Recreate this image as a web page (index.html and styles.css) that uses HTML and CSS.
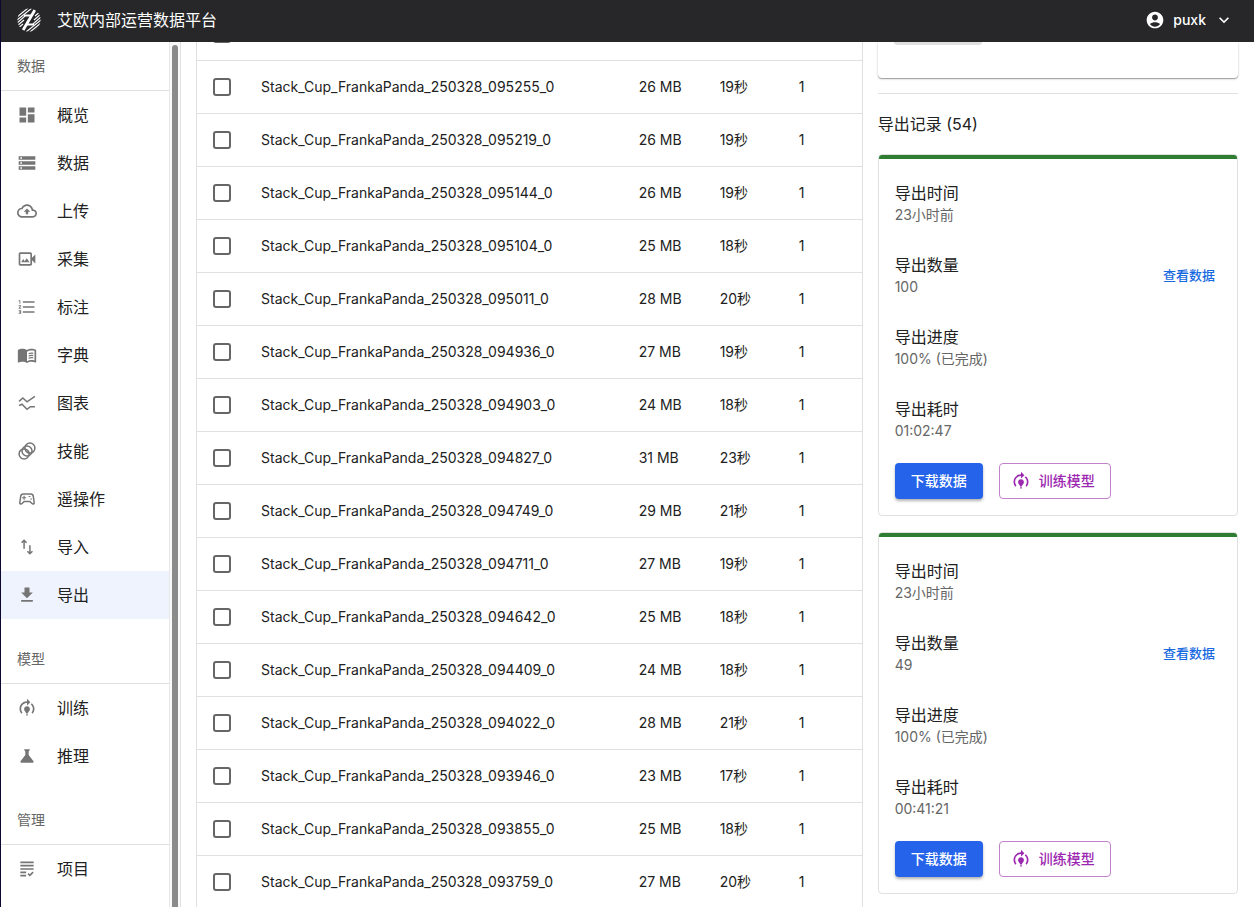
FILE: index.html
```html
<!DOCTYPE html>
<html lang="zh-CN">
<head>
<meta charset="UTF-8">
<meta name="viewport" content="width=device-width, initial-scale=1.0">
<title>艾欧内部运营数据平台</title>
<link rel="stylesheet" href="styles.css">
</head>
<body>
  <!-- Shared icons -->
  <svg class="sprite" aria-hidden="true">
    <symbol id="icon-training" viewBox="0 0 24 24">
      <path d="M15.5 13.5c0 2-2.5 3.5-2.5 5h-2c0-1.5-2.5-3-2.5-5 0-1.93 1.57-3.5 3.5-3.5s3.5 1.57 3.5 3.5zm-2.5 6h-2V21h2v-1.5zm6-6.5c0 1.68-.59 3.21-1.58 4.42l1.42 1.42C20.18 17.27 21 15.23 21 13c0-2.74-1.23-5.19-3.16-6.84l-1.42 1.42C17.99 8.86 19 10.82 19 13zm-3-8-4-4v3c-4.97 0-9 4.03-9 9 0 2.23.82 4.27 2.16 5.84l1.42-1.42C5.59 16.21 5 14.68 5 13c0-3.86 3.14-7 7-7v3l4-4z"/>
    </symbol>
  </svg>

  <header class="topbar">
    <svg class="logo" viewBox="0 0 24 24" aria-hidden="true">
      <clipPath id="logo-clip"><circle cx="12" cy="12" r="11.6"/></clipPath>
      <g clip-path="url(#logo-clip)" fill="none" stroke="#fff">
        <path stroke-width="1.1" d="M0 6 7 0M0 9 11 0M0 12 15 0M0 15 8 8M0 18 7 12M0 21 6 16M24 18 17 24M24 15 13 24M24 12 9 24M24 9 16 16M24 6 17 12M24 3 18 8"/>
        <path stroke-width="2.8" d="M5 24 19 0"/>
        <path stroke-width="1.8" d="M7 7.5h7M10 16.5h7"/>
      </g>
    </svg>
    <h1 class="brand">艾欧内部运营数据平台</h1>
    <button class="user" type="button">
      <svg class="icon" viewBox="0 0 24 24" aria-hidden="true"><path d="M12 2C6.48 2 2 6.48 2 12s4.48 10 10 10 10-4.48 10-10S17.52 2 12 2zm0 3.5c1.93 0 3.5 1.57 3.5 3.5S13.93 12.5 12 12.5 8.5 10.93 8.5 9s1.57-3.5 3.5-3.5zM12 20c-2.3 0-4.45-1-6.1-3.1C7.55 15.4 9.7 14.6 12 14.6s4.45.8 6.1 2.3C16.45 19 14.3 20 12 20z"/></svg>
      <span>puxk</span>
      <svg class="icon" viewBox="0 0 24 24" aria-hidden="true"><path d="M16.59 8.59 12 13.17 7.41 8.59 6 10l6 6 6-6z"/></svg>
    </button>
  </header>

  <div class="layout">
    <div class="sidebar">
      <nav class="menu">
        <h2 class="menu-title">数据</h2>
        <ul class="menu-list">
          <li><a class="menu-item" href="#"><svg class="icon" viewBox="0 0 24 24"><path d="M3 13h8V3H3v10zm0 8h8v-6H3v6zm10 0h8V11h-8v10zm0-18v6h8V3h-8z"/></svg>概览</a></li>
          <li><a class="menu-item" href="#"><svg class="icon" viewBox="0 0 24 24"><path d="M2 20h20v-4H2v4zm2-3h2v2H4v-2zM2 4v4h20V4H2zm4 3H4V5h2v2zm-4 7h20v-4H2v4zm2-3h2v2H4v-2z"/></svg>数据</a></li>
          <li><a class="menu-item" href="#"><svg class="icon" viewBox="0 0 24 24"><path d="M19.35 10.04C18.67 6.59 15.64 4 12 4 9.11 4 6.6 5.64 5.35 8.04 2.34 8.36 0 10.91 0 14c0 3.31 2.69 6 6 6h13c2.76 0 5-2.24 5-5 0-2.64-2.05-4.78-4.65-4.96zM19 18H6c-2.21 0-4-1.79-4-4 0-2.05 1.53-3.76 3.56-3.97l1.07-.11.5-.95C8.08 7.14 9.94 6 12 6c2.62 0 4.88 1.86 5.39 4.43l.3 1.5 1.53.11c1.56.1 2.78 1.41 2.78 2.96 0 1.65-1.35 3-3 3zM8 13h2.55v3h2.9v-3H16l-4-4z"/></svg>上传</a></li>
          <li><a class="menu-item" href="#"><svg class="icon" viewBox="0 0 24 24"><path d="M18 10.48V6c0-1.1-.9-2-2-2H4c-1.1 0-2 .9-2 2v12c0 1.1.9 2 2 2h12c1.1 0 2-.9 2-2v-4.48l4 3.98v-11l-4 3.98zM16 18H4V6h12v12zM11.67 11l-2.5 3.72L7.5 12 5 16h10z"/></svg>采集</a></li>
          <li><a class="menu-item" href="#"><svg class="icon" viewBox="0 0 24 24"><path d="M2 17h2v.5H3v1h1v.5H2v1h3v-4H2v1zm1-9h1V4H2v1h1v3zm-1 3h1.8L2 13.1v.9h3v-1H3.2L5 10.9V10H2v1zm5-6v2h14V5H7zm0 14h14v-2H7v2zm0-6h14v-2H7v2z"/></svg>标注</a></li>
          <li><a class="menu-item" href="#"><svg class="icon" viewBox="0 0 24 24"><path d="M21 5c-1.11-.35-2.33-.5-3.5-.5-1.95 0-4.05.4-5.5 1.5-1.45-1.1-3.55-1.5-5.5-1.5S2.45 4.9 1 6v14.65c0 .25.25.5.5.5.1 0 .15-.05.25-.05C3.1 20.45 5.05 20 6.5 20c1.95 0 4.05.4 5.5 1.5 1.35-.85 3.8-1.5 5.5-1.5 1.65 0 3.35.3 4.75 1.05.1.05.15.05.25.05.25 0 .5-.25.5-.5V6c-.6-.45-1.25-.75-2-1zm0 13.5c-1.1-.35-2.3-.5-3.5-.5-1.7 0-4.15.65-5.5 1.5V8c1.35-.85 3.8-1.5 5.5-1.5 1.2 0 2.4.15 3.5.5v11.5z"/><path d="M14 9.7c1.8-.7 3.7-.8 5.5-.4v1.5c-1.8-.4-3.7-.3-5.5.4zm0 2.7c1.8-.7 3.7-.8 5.5-.4v1.5c-1.8-.4-3.7-.3-5.5.4zm0 2.7c1.8-.7 3.7-.8 5.5-.4v1.5c-1.8-.4-3.7-.3-5.5.4z"/></svg>字典</a></li>
          <li><a class="menu-item" href="#"><svg class="icon icon-line" viewBox="0 0 24 24"><path d="M2.5 10 7 6l5 4.5L21.5 4M2.5 15 6 13.5l6 6 4-3h5.5"/></svg>图表</a></li>
          <li><a class="menu-item" href="#"><svg class="icon icon-line" viewBox="0 0 24 24"><circle cx="8.5" cy="15.5" r="6"/><circle cx="12" cy="12" r="6"/><circle cx="15.5" cy="8.5" r="6"/></svg>技能</a></li>
          <li><a class="menu-item" href="#"><svg class="icon icon-line" viewBox="0 0 24 24"><path d="M7.5 6h9c1.5 0 2.8 1.1 3 2.6l1.1 7.6c.2 1.2-.6 1.8-1.5 1.8-.5 0-.8-.2-1.1-.5L15.4 15H8.6L6 17.500c-.3.3-.6.5-1.1.5-.9 0-1.7-.6-1.5-1.8l1.100-7.600c.2-1.500 1.500-2.600 3-2.600z"/><path stroke-width="1.4" d="M6 10.500h5M8.500 8v5M14 9h2M16 12h2"/></svg>遥操作</a></li>
          <li><a class="menu-item" href="#"><svg class="icon icon-line" viewBox="0 0 24 24"><path d="M8.5 14V4M5.5 7l3-3 3 3M15.5 10v10M12.5 17l3 3 3-3"/></svg>导入</a></li>
          <li><a class="menu-item active" href="#"><svg class="icon" viewBox="0 0 24 24"><path d="M5 20h14v-2H5v2zM19 9h-4V3H9v6H5l7 7 7-7z"/></svg>导出</a></li>
        </ul>

        <h2 class="menu-title">模型</h2>
        <ul class="menu-list">
          <li><a class="menu-item" href="#"><svg class="icon"><use href="#icon-training"/></svg>训练</a></li>
          <li><a class="menu-item" href="#"><svg class="icon" viewBox="0 0 24 24"><path d="M19.8 18.4 14 10.67V6.5l1.35-1.69c.26-.33.03-.81-.39-.81H9.04c-.42 0-.65.48-.39.81L10 6.5v4.17L4.2 18.4c-.49.66-.02 1.6.8 1.6h14c.82 0 1.29-.94.8-1.6z"/></svg>推理</a></li>
        </ul>

        <h2 class="menu-title">管理</h2>
        <ul class="menu-list">
          <li><a class="menu-item" href="#"><svg class="icon" viewBox="0 0 24 24"><path d="M4 7h16v2H4V7zm0 6h16v-2H4v2zm0 4h7v-2H4v2zm0 4h7v-2H4v2zm11.41-2.83L14 16.75l-1.41 1.41L15.41 21 20 16.42 18.58 15l-3.17 3.17zM4 3v2h16V3H4z"/></svg>项目</a></li>
        </ul>
      </nav>
      <div class="scroll-track"><div class="scroll-thumb"></div></div>
    </div>

    <main class="content">
      <section class="data-panel">
        <table class="data-table">
          <colgroup>
            <col class="col-check">
            <col>
            <col class="col-size">
            <col class="col-meta">
            <col class="col-meta">
          </colgroup>
          <tbody>
            <tr><td class="check"><input type="checkbox" aria-label="选择"></td><td></td><td></td><td></td><td></td></tr>
            <tr><td class="check"><input type="checkbox" id="r1"></td><td><label for="r1">Stack_Cup_FrankaPanda_250328_095255_0</label></td><td>26 MB</td><td>19秒</td><td>1</td></tr>
            <tr><td class="check"><input type="checkbox" id="r2"></td><td><label for="r2">Stack_Cup_FrankaPanda_250328_095219_0</label></td><td>26 MB</td><td>19秒</td><td>1</td></tr>
            <tr><td class="check"><input type="checkbox" id="r3"></td><td><label for="r3">Stack_Cup_FrankaPanda_250328_095144_0</label></td><td>26 MB</td><td>19秒</td><td>1</td></tr>
            <tr><td class="check"><input type="checkbox" id="r4"></td><td><label for="r4">Stack_Cup_FrankaPanda_250328_095104_0</label></td><td>25 MB</td><td>18秒</td><td>1</td></tr>
            <tr><td class="check"><input type="checkbox" id="r5"></td><td><label for="r5">Stack_Cup_FrankaPanda_250328_095011_0</label></td><td>28 MB</td><td>20秒</td><td>1</td></tr>
            <tr><td class="check"><input type="checkbox" id="r6"></td><td><label for="r6">Stack_Cup_FrankaPanda_250328_094936_0</label></td><td>27 MB</td><td>19秒</td><td>1</td></tr>
            <tr><td class="check"><input type="checkbox" id="r7"></td><td><label for="r7">Stack_Cup_FrankaPanda_250328_094903_0</label></td><td>24 MB</td><td>18秒</td><td>1</td></tr>
            <tr><td class="check"><input type="checkbox" id="r8"></td><td><label for="r8">Stack_Cup_FrankaPanda_250328_094827_0</label></td><td>31 MB</td><td>23秒</td><td>1</td></tr>
            <tr><td class="check"><input type="checkbox" id="r9"></td><td><label for="r9">Stack_Cup_FrankaPanda_250328_094749_0</label></td><td>29 MB</td><td>21秒</td><td>1</td></tr>
            <tr><td class="check"><input type="checkbox" id="r10"></td><td><label for="r10">Stack_Cup_FrankaPanda_250328_094711_0</label></td><td>27 MB</td><td>19秒</td><td>1</td></tr>
            <tr><td class="check"><input type="checkbox" id="r11"></td><td><label for="r11">Stack_Cup_FrankaPanda_250328_094642_0</label></td><td>25 MB</td><td>18秒</td><td>1</td></tr>
            <tr><td class="check"><input type="checkbox" id="r12"></td><td><label for="r12">Stack_Cup_FrankaPanda_250328_094409_0</label></td><td>24 MB</td><td>18秒</td><td>1</td></tr>
            <tr><td class="check"><input type="checkbox" id="r13"></td><td><label for="r13">Stack_Cup_FrankaPanda_250328_094022_0</label></td><td>28 MB</td><td>21秒</td><td>1</td></tr>
            <tr><td class="check"><input type="checkbox" id="r14"></td><td><label for="r14">Stack_Cup_FrankaPanda_250328_093946_0</label></td><td>23 MB</td><td>17秒</td><td>1</td></tr>
            <tr><td class="check"><input type="checkbox" id="r15"></td><td><label for="r15">Stack_Cup_FrankaPanda_250328_093855_0</label></td><td>25 MB</td><td>18秒</td><td>1</td></tr>
            <tr><td class="check"><input type="checkbox" id="r16"></td><td><label for="r16">Stack_Cup_FrankaPanda_250328_093759_0</label></td><td>27 MB</td><td>20秒</td><td>1</td></tr>
          </tbody>
        </table>
      </section>

      <aside class="export-panel">
        <div class="form-card">
          <button class="btn btn-disabled" type="button" aria-label="导出" disabled></button>
        </div>
        <hr class="divider">
        <h2 class="export-title">导出记录 (54)</h2>

        <article class="record">
          <dl class="record-list">
            <div class="record-item"><dt>导出时间</dt><dd>23小时前</dd></div>
            <div class="record-item with-action">
              <div><dt>导出数量</dt><dd>100</dd></div>
              <dd class="action"><button class="btn-text" type="button">查看数据</button></dd>
            </div>
            <div class="record-item"><dt>导出进度</dt><dd>100% (已完成)</dd></div>
            <div class="record-item"><dt>导出耗时</dt><dd>01:02:47</dd></div>
          </dl>
          <div class="record-actions">
            <button class="btn btn-primary" type="button">下载数据</button>
            <button class="btn btn-outlined" type="button"><svg class="icon"><use href="#icon-training"/></svg>训练模型</button>
          </div>
        </article>

        <article class="record">
          <dl class="record-list">
            <div class="record-item"><dt>导出时间</dt><dd>23小时前</dd></div>
            <div class="record-item with-action">
              <div><dt>导出数量</dt><dd>49</dd></div>
              <dd class="action"><button class="btn-text" type="button">查看数据</button></dd>
            </div>
            <div class="record-item"><dt>导出进度</dt><dd>100% (已完成)</dd></div>
            <div class="record-item"><dt>导出耗时</dt><dd>00:41:21</dd></div>
          </dl>
          <div class="record-actions">
            <button class="btn btn-primary" type="button">下载数据</button>
            <button class="btn btn-outlined" type="button"><svg class="icon"><use href="#icon-training"/></svg>训练模型</button>
          </div>
        </article>
      </aside>
    </main>
  </div>
</body>
</html>
```

FILE: styles.css
```css
* {
  box-sizing: border-box;
}

body {
  margin: 0;
  height: 100vh;
  display: flex;
  flex-direction: column;
  overflow: hidden;
  border-left: 1px solid #0d0630;
  background: #fff;
  color: #212121;
  font-family: Inter, "Noto Sans CJK SC", sans-serif;
  font-size: 14px;
  line-height: 20px;
}

h1, h2, ul, dl, dd {
  margin: 0;
  padding: 0;
  font-weight: 400;
}

ul {
  list-style: none;
}

button {
  font: inherit;
  border: 0;
  background: none;
  cursor: pointer;
}

.sprite {
  display: none;
}

.icon {
  width: 20px;
  height: 20px;
  flex: none;
  fill: currentColor;
}

.icon-line {
  fill: none;
  stroke: currentColor;
  stroke-width: 1.8;
}

/* Top bar */
.topbar {
  flex: none;
  display: flex;
  align-items: center;
  height: 42px;
  padding: 0 20px 2px 16px;
  background: #27272a;
  color: #fff;
}

.logo {
  width: 24px;
  height: 24px;
  margin-right: 16px;
}

.brand {
  flex: 1;
  font-size: 16px;
  line-height: 24px;
}

.user {
  display: flex;
  align-items: center;
  gap: 8px;
  padding: 0;
  color: #fff;
  font-weight: 500;
}

.layout {
  flex: 1;
  display: flex;
  min-height: 0;
}

/* Sidebar */
.sidebar {
  flex: none;
  display: flex;
  width: 180px;
  border-right: 1px solid #e0e0e0;
}

.menu {
  flex: 1;
  overflow: hidden;
}

.menu-title {
  height: 49px;
  padding: 0 16px;
  border-bottom: 1px solid #e0e0e0;
  color: #666;
  font-size: 14px;
  line-height: 48px;
}

.menu-list {
  margin-bottom: 16px;
}

.menu-item {
  display: flex;
  align-items: center;
  gap: 20px;
  height: 48px;
  padding: 0 16px;
  color: #212121;
  font-size: 16px;
  text-decoration: none;
}

.menu-item .icon {
  color: #757575;
}

.menu-item.active {
  background: #eff3fe;
}

.scroll-track {
  width: 11px;
  padding: 3px 2px 0;
  border-left: 1px solid #e8e8e8;
  background: #fafafa;
}

.scroll-thumb {
  height: 100%;
  border-radius: 3px 3px 0 0;
  background: #8b8b8b;
}

/* Main content */
.content {
  flex: 1;
  display: grid;
  grid-template-columns: 37fr 20fr;
  align-items: start;
  gap: 15px;
  min-width: 0;
  padding: 0 16px 0 15px;
  overflow: hidden;
}

/* Data table, scrolled part of the way down */
.data-panel {
  margin-top: -35px;
  border: 1px solid #e0e0e0;
}

.data-table {
  width: 100%;
  table-layout: fixed;
  border-collapse: separate;
  border-spacing: 0;
}

.col-check {
  width: 48px;
}

.col-size {
  width: 81px;
}

.col-meta {
  width: 79px;
}

.data-table td {
  height: 53px;
  padding: 0 16px;
  border-bottom: 1px solid #e0e0e0;
  white-space: nowrap;
}

.data-table .check {
  padding: 0 0 0 16px;
}

.check input {
  appearance: none;
  display: block;
  width: 18px;
  height: 18px;
  margin: 0;
  border: 2px solid #666;
  border-radius: 3px;
}

.check input:checked {
  border-color: #2563eb;
  background: #2563eb;
}

/* Export column */
.form-card {
  height: 36px;
  padding: 0 16px;
  border-radius: 0 0 4px 4px;
  box-shadow: 0 1px 1px rgba(0, 0, 0, 0.3), 0 1px 3px rgba(0, 0, 0, 0.15);
}

.divider {
  margin: 15px 0 0;
  border: 0;
  border-top: 1px solid #e0e0e0;
}

.export-title {
  padding: 18px 0;
  font-size: 16px;
  line-height: 24px;
}

.record {
  margin-bottom: 16px;
  border: 1px solid #e0e0e0;
  border-radius: 4px;
}

.record::before {
  content: "";
  display: block;
  height: 4px;
  border-radius: 3px 3px 0 0;
  background: #2e7d32;
}

.record-list {
  padding: 8px 0;
}

.record-item {
  padding: 14px 16px;
}

.record-item dt {
  font-size: 16px;
  line-height: 24px;
}

.record-item dd {
  color: #666;
}

.with-action {
  display: flex;
  align-items: center;
  justify-content: space-between;
}

.btn-text {
  padding: 4px 6px;
  color: #1769e0;
  font-size: 13px;
  font-weight: 500;
}

.record-actions {
  display: flex;
  gap: 16px;
  padding: 0 16px 16px;
}

.btn {
  display: flex;
  align-items: center;
  justify-content: center;
  height: 36px;
  padding: 0 16px;
  border-radius: 4px;
  font-weight: 500;
}

.btn-primary {
  background: #2563eb;
  color: #fff;
  box-shadow: 0 2px 3px rgba(0, 0, 0, 0.3);
}

.btn-outlined {
  gap: 8px;
  padding: 0 15px 0 11px;
  border: 1px solid #c182cb;
  color: #9c27b0;
}

.btn-disabled {
  width: 88px;
  height: 3px;
  border-radius: 0 0 4px 4px;
  background: #e0e0e0;
}
```
